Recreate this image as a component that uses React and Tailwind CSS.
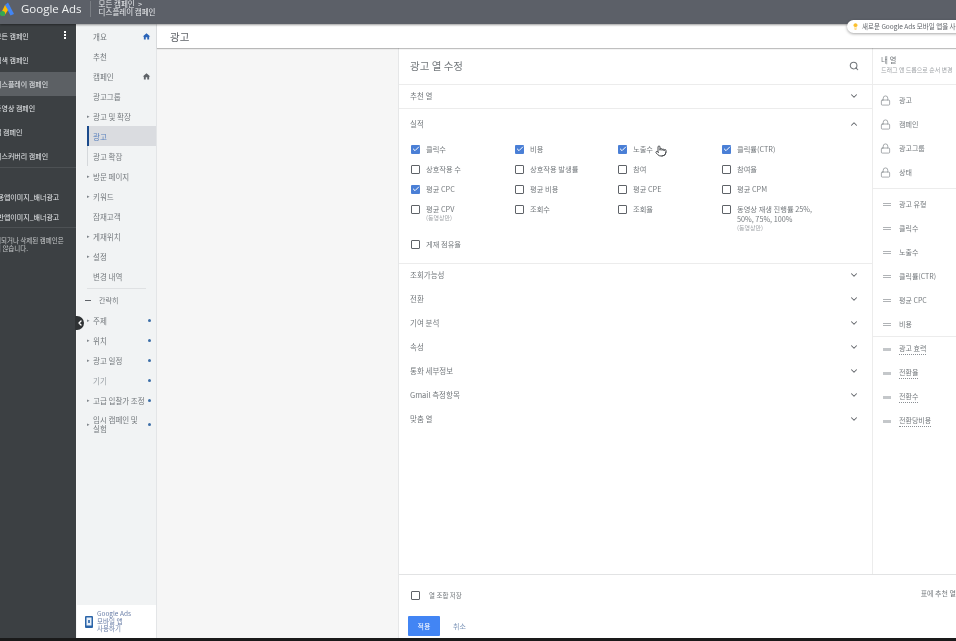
import React from "react";
import { Search, ChevronDown, ChevronUp, Lock, Check, Pointer, ChevronLeft, Lightbulb } from "lucide-react";

function HomeIcon({ color }) {
  return (
    <svg width="9" height="9" viewBox="0 0 24 24" className="shrink-0">
      <path d="M10 20v-6h4v6h5v-8h3L12 3 2 12h3v8z" fill={color} />
    </svg>
  );
}

function DarkRow({ text, active }) {
  return (
    <div className={`h-6 flex items-center justify-between shrink-0 ${active ? "bg-[#5c6064]" : ""}`}>
      <span className="whitespace-nowrap text-[7px] text-[#e8eaed] ml-[-5px]">{text}</span>
    </div>
  );
}

function NavRow({ text, arrow, icon, dot, active, tall, muted, line }) {
  return (
    <div className={`relative flex items-center shrink-0 pr-[5px] ${tall ? "h-7" : "h-5"} ${active ? "bg-[#dadce0] border-l-2 border-[#1a4a8c] ml-[10px] pl-[4px]" : "pl-[10px]"}`}>
      {line && <span className="absolute left-[10px] top-0 bottom-0 w-px bg-[#d5d8db]" />}
      {!active && <span className="w-[3px] text-[5px] text-[#80868b] mr-[3px] shrink-0">{arrow ? "▸" : ""}</span>}
      <span className={`flex-1 text-[7.5px] leading-[9px] ${tall ? "pr-[8px]" : ""} ${muted ? "text-[#9aa0a6]" : active ? "text-[#5b82bd]" : "text-[#74797d]"}`}>{text}</span>
      {icon === "blue" && <HomeIcon color="#2a64b8" />}
      {icon === "dark" && <HomeIcon color="#5f6368" />}
      {dot && <span className="w-[3px] h-[3px] rounded-full bg-[#3d6fa8]" />}
    </div>
  );
}

function Box({ on, text, sub, className = "" }) {
  return (
    <div className={`flex items-start gap-[6px] ${className}`}>
      <span className={`mt-[0.5px] w-[9px] h-[9px] shrink-0 rounded-[1px] flex items-center justify-center ${on ? "bg-[#4a7fd6]" : "border border-[#5f6368]"}`}>
        {on && <Check size={8} strokeWidth={3} className="text-white" />}
      </span>
      <span className="text-[7.25px] leading-[10px] text-[#74797d]">
        {text}
        {sub && <span className="block text-[6px] leading-[8px] text-[#a0a4a8]">{sub}</span>}
      </span>
    </div>
  );
}

function Section({ text }) {
  return (
    <div className="h-6 flex items-center justify-between pl-[11px] pr-[13px] text-[7.5px] text-[#74797d]">
      <span>{text}</span>
      <ChevronDown size={10} strokeWidth={2.5} className="text-[#5f6368]" />
    </div>
  );
}

function LockRow({ text }) {
  return (
    <div className="h-6 flex items-center pl-[7px] gap-[8px] text-[7px] text-[#74797d] whitespace-nowrap">
      <Lock size={11} strokeWidth={1.5} className="text-[#80868b]" />
      <span>{text}</span>
    </div>
  );
}

function DragRow({ text, thick }) {
  return (
    <div className="h-6 flex items-center pl-[10px] gap-[8px] text-[7px] text-[#74797d] whitespace-nowrap">
      {thick ? (
        <span className="w-2 h-[3px] bg-[#c4c7ca] shrink-0" />
      ) : (
        <span className="w-2 h-[3px] border-y border-[#b0b3b6] shrink-0" />
      )}
      <span className={thick ? "border-b border-dotted border-[#8a8f94]" : ""}>{text}</span>
    </div>
  );
}

export default function App() {
  return (
    <div className="relative w-[956px] h-[641px] overflow-hidden bg-[#f6f6f6] flex flex-col blur-[0.45px]" style={{ fontFamily: '"Noto Sans CJK KR", "Noto Sans", sans-serif' }}>
      {/* Header */}
      <header className="h-6 shrink-0 bg-[#5c6068] flex items-center pb-[7px] shadow-[0_1px_2px_rgba(0,0,0,0.4)] z-10">
        <svg width="16" height="16" viewBox="0 0 16 16" className="ml-[-1px] mr-[6px] shrink-0">
          <path d="M9 1.5 L15 13 L11.5 14.5 L6 4 Z" fill="#4285f4" />
          <path d="M6 4 L9 9 L5.5 14.5 L2 12.5 Z" fill="#fbbc04" />
          <circle cx="3.5" cy="12.5" r="2.6" fill="#34a853" />
        </svg>
        <span className="text-[11.5px] text-[#f1f3f4] whitespace-nowrap" style={{ fontFamily: '"Open Sans", sans-serif' }}>Google Ads</span>
        <span className="w-px h-4 bg-[#7a7e84] ml-[8px] mr-[8px]" />
        <div className="text-[7.5px] leading-[8.5px] text-[#e8eaed] whitespace-nowrap -mt-[1px]">
          <div>모든 캠페인 &nbsp;&gt;</div>
          <div>디스플레이 캠페인</div>
        </div>
      </header>

      <div className="flex-1 flex min-h-0">
        {/* Dark sidebar */}
        <aside className="w-[76px] shrink-0 bg-[#3c4043] flex flex-col overflow-hidden pt-0 relative">
          <div className="relative">
            <DarkRow text="모든 캠페인" />
            <span className="absolute left-[64px] top-[7px] flex flex-col gap-[1px]">
              <i className="w-[2px] h-[2px] bg-white block" />
              <i className="w-[2px] h-[2px] bg-white block" />
              <i className="w-[2px] h-[2px] bg-white block" />
            </span>
          </div>
          <DarkRow text="검색 캠페인" />
          <DarkRow text="디스플레이 캠페인" active />
          <DarkRow text="동영상 캠페인" />
          <DarkRow text="앱 캠페인" />
          <DarkRow text="디스커버리 캠페인" />
          <div className="h-[18px] border-t border-[#4d5154] mt-[-1px]" />
          <div className="h-5 flex items-center shrink-0 mt-[2px]"><span className="whitespace-nowrap text-[7px] text-[#e8eaed] ml-[-9px]">전용앱이미지_배너광고</span></div>
          <div className="h-5 flex items-center shrink-0"><span className="whitespace-nowrap text-[7px] text-[#e8eaed] ml-[-9px]">일반앱이미지_배너광고</span></div>
          <div className="border-t border-[#4d5154] pt-[8px] text-[6.5px] leading-[8px] text-[#c8cacc] whitespace-nowrap">
            <div className="ml-[-11px]">삭제되거나 삭제된 캠페인은</div>
            <div className="ml-[-23px]">표시되지 않습니다.</div>
          </div>
        </aside>

        {/* Nav */}
        <nav className="w-[80px] ml-[1px] shrink-0 bg-[#f1f3f4] border-r border-[#e3e5e7] flex flex-col pt-[2px]">
          <NavRow text="개요" icon="blue" />
          <NavRow text="추천" />
          <NavRow text="캠페인" icon="dark" />
          <NavRow text="광고그룹" />
          <NavRow text="광고 및 확장" arrow />
          <NavRow text="광고" active />
          <NavRow text="광고 확장" line />
          <NavRow text="방문 페이지" arrow />
          <NavRow text="키워드" arrow />
          <NavRow text="잠재고객" />
          <NavRow text="게재위치" arrow />
          <NavRow text="설정" arrow />
          <NavRow text="변경 내역" />
          <div className="mx-[10px] mt-[2px] border-t border-[#dfe1e3]" />
          <div className="h-5 mt-[1px] pt-[1px] flex items-center pl-[8px] gap-[8px] text-[7px] text-[#74797d]"><span className="w-[6px] h-px bg-[#5f6368]" />간략히</div>
          <NavRow text="주제" arrow dot />
          <NavRow text="위치" arrow dot />
          <NavRow text="광고 일정" arrow dot />
          <NavRow text="기기" dot muted />
          <NavRow text="고급 입찰가 조정" arrow dot />
          <NavRow text="임시 캠페인 및 실험" arrow dot tall />
          <div className="mt-auto h-[33px] bg-white flex items-center pl-[8px] gap-[4px] text-[6.5px] leading-[7.5px] text-[#6a7fa8]">
            <svg width="8" height="12" viewBox="0 0 8 12" className="shrink-0">
              <rect x="0" y="0" width="8" height="12" rx="1" fill="#2a64a8" />
              <rect x="1.5" y="1.5" width="5" height="8" fill="#e8f0fa" />
              <rect x="3.2" y="4" width="1.6" height="3" fill="#2a64a8" />
            </svg>
            <div>
              <div>Google Ads</div>
              <div>모바일 앱</div>
              <div>사용하기</div>
            </div>
          </div>
        </nav>

        {/* Main */}
        <main className="flex-1 min-w-0 flex flex-col">
          <div className="h-6 shrink-0 bg-white shadow-[0_1px_1px_rgba(0,0,0,0.25)] flex items-center pl-[13px] pt-[2px] text-[10.5px] text-[#5f6368] z-[1]">광고</div>
          <div className="flex-1 flex min-h-0 pl-[241px]">
            <div className="flex-1 min-w-0 bg-white border-l border-[#e6e7e8] flex flex-col">
              <div className="flex-1 flex min-h-0">
                {/* Column picker */}
                <div className="w-[473px] shrink-0 flex flex-col">
                  <div className="h-[37px] shrink-0 flex items-center justify-between pl-[11px] pr-[13px] border-b border-[#ececec] text-[10.5px] text-[#74797d]">
                    <span>광고 열 수정</span>
                    <Search size={10} strokeWidth={2.5} className="text-[#70757a]" />
                  </div>
                  <div className="h-6 shrink-0 flex items-center justify-between pb-[2px] pl-[11px] pr-[13px] border-b border-[#ececec] text-[7.5px] text-[#74797d]">
                    <span>추천 열</span>
                    <ChevronDown size={10} strokeWidth={2.5} className="text-[#5f6368]" />
                  </div>
                  <div className="shrink-0 border-b border-[#ececec] h-[155px] pl-[12px] pr-[13px] relative">
                    <div className="flex items-center justify-between h-[31px] pb-[2px] -ml-px text-[7.5px] text-[#74797d]">
                      <span>실적</span>
                      <ChevronUp size={10} strokeWidth={2.5} className="text-[#5f6368]" />
                    </div>
                    <div className="grid grid-cols-[104px_103px_104px_100px] auto-rows-[20px] mt-[4px]">
                      <Box on text="클릭수" />
                      <Box on text="비용" />
                      <Box on text="노출수" />
                      <Box on text="클릭률(CTR)" />
                      <Box text="상호작용 수" />
                      <Box text="상호작용 발생률" />
                      <Box text="참여" />
                      <Box text="참여율" />
                      <Box on text="평균 CPC" />
                      <Box text="평균 비용" />
                      <Box text="평균 CPE" />
                      <Box text="평균 CPM" />
                      <Box text="평균 CPV" sub="(동영상만)" />
                      <Box text="조회수" />
                      <Box text="조회율" />
                      <Box text="동영상 재생 진행률 25%, 50%, 75%, 100%" sub="(동영상만)" />
                    </div>
                    <Box text="게재 점유율" className="mt-[15px]" />
                    <Pointer size={12} className="absolute left-[256px] top-[36px] text-[#4a4d50]" />
                  </div>
                  <div className="-mt-px">
                    {["조회가능성", "전환", "기여 분석", "속성", "통화 세부정보", "Gmail 측정항목", "맞춤 열"].map((t) => (
                      <Section key={t} text={t} />
                    ))}
                  </div>
                </div>

                {/* My columns */}
                <div className="flex-1 min-w-0 border-l border-[#ececec] overflow-hidden">
                  <div className="h-[37px] pl-2 pt-[7px] border-b border-[#ececec] whitespace-nowrap">
                    <div className="text-[7.5px] leading-[10px] text-[#74797d]">내 열</div>
                    <div className="text-[6px] leading-[9px] text-[#a0a4a8]">드래그 앤 드롭으로 순서 변경</div>
                  </div>
                  <div className="pt-[3px] pb-[4px] border-b border-[#ececec]">
                    {["광고", "캠페인", "광고그룹", "상태"].map((t) => <LockRow key={t} text={t} />)}
                  </div>
                  <div className="pt-[3px] border-b border-[#ececec]">
                    {["광고 유형", "클릭수", "노출수", "클릭률(CTR)", "평균 CPC", "비용"].map((t) => <DragRow key={t} text={t} />)}
                  </div>
                  {["광고 효력", "전환율", "전환수", "전환당비용"].map((t) => <DragRow key={t} text={t} thick />)}
                </div>
              </div>

              {/* Footer */}
              <div className="h-[64px] shrink-0 border-t border-[#e2e3e4]">
                <div className="flex justify-between items-start pl-[12px] pt-[16px] whitespace-nowrap">
                  <div className="flex items-center gap-[9px] text-[6.5px] text-[#74797d]">
                    <span className="w-[9px] h-[9px] border border-[#5f6368] rounded-[1px]" />
                    열 조합 저장
                  </div>
                  <span className="text-[7px] text-[#74797d] mt-[-3px]">표에 추천 열</span>
                </div>
                <div className="flex items-center gap-[13px] pl-[9px] mt-[15px]">
                  <span className="w-[32px] h-[20px] bg-[#4285f4] rounded-[1px] text-white text-[7px] flex items-center justify-center">적용</span>
                  <span className="text-[7px] text-[#7d95b8]">취소</span>
                </div>
              </div>
            </div>
          </div>
        </main>
      </div>

      {/* Bottom strip */}
      <div className="h-[3px] shrink-0 bg-[#1a1a1a]" />

      {/* Overlays */}
      <div className="absolute left-[847px] top-[20px] w-[120px] h-[13px] bg-white rounded-full shadow-[0_1px_3px_rgba(0,0,0,0.35)] flex items-center pl-[5px] gap-[3px] z-20 whitespace-nowrap text-[6.5px] text-[#5f6368]">
        <Lightbulb size={7} fill="#fbc02d" className="text-[#fbc02d] shrink-0" />
        새로운 Google Ads 모바일 앱을 사용
      </div>
      <div className="absolute left-[75px] top-[316px] w-[9px] h-[14px] bg-[#2f3234] rounded-r-full flex items-center justify-center z-20">
        <ChevronLeft size={8} strokeWidth={4} className="text-white" />
      </div>
    </div>
  );
}
